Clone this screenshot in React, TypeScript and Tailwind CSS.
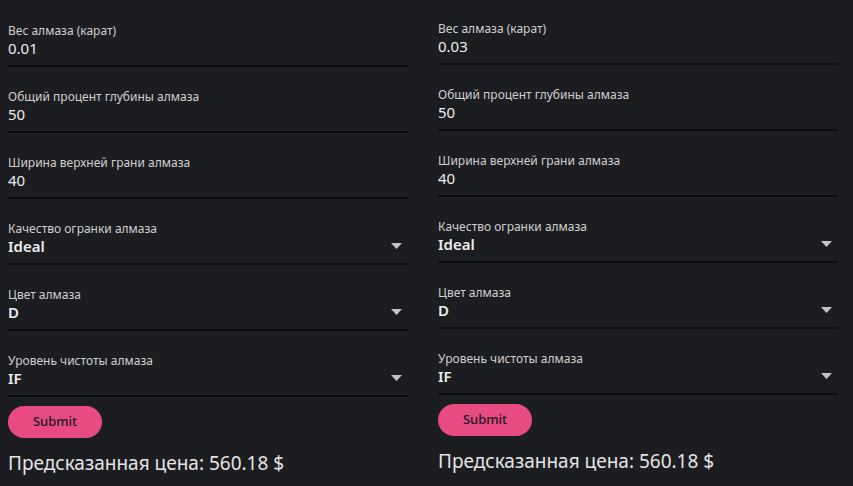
import React from 'react'

type Field = { label: string; value: string; select?: boolean }

const makeFields = (weight: string): Field[] => [
  { label: 'Вес алмаза (карат)', value: weight },
  { label: 'Общий процент глубины алмаза', value: '50' },
  { label: 'Ширина верхней грани алмаза', value: '40' },
  { label: 'Качество огранки алмаза', value: 'Ideal', select: true },
  { label: 'Цвет алмаза', value: 'D', select: true },
  { label: 'Уровень чистоты алмаза', value: 'IF', select: true },
]

const Caret = () => (
  <svg width="11" height="6" viewBox="0 0 11 6" className="shrink-0">
    <path d="M0 0 L11 0 L5.5 6 Z" fill="#c4c4c6" />
  </svg>
)

const FormColumn = ({ weight, offset }: { weight: string; offset: string }) => {
  const fields = makeFields(weight)
  return (
    <div className={`w-[400px] flex flex-col ${offset}`}>
      {fields.map((f, i) => (
        <div key={i} className={`flex flex-col ${i < fields.length - 1 ? 'mb-[23px]' : ''}`}>
          <div className="text-[12px] leading-[14px] text-[#cfcfd1]">{f.label}</div>
          <div className="flex items-center justify-between pr-[6px] pt-[1px]">
            <div className={`text-[15px] leading-[18px] text-[#ececee] ${f.select ? 'font-semibold' : ''}`}>{f.value}</div>
            {f.select && <Caret />}
          </div>
          <div className="h-[8px]"></div>
          <div className="h-[2px] bg-[#0e0f11]"></div>
        </div>
      ))}
      <button className="mt-[9px] w-[94px] h-[32px] rounded-full bg-[#e84a82] text-[13px] font-medium text-[#1a1b1e]">
        Submit
      </button>
      <div className="mt-[11px] text-[19px] leading-7 text-[#e4e4e6]">Предсказанная цена: 560.18 $</div>
    </div>
  )
}

export default function App() {
  return (
    <div className="w-[853px] h-[486px] bg-[#1c1d20] overflow-hidden" style={{ fontFamily: '"Noto Sans", sans-serif' }}>
      <div className="flex gap-[30px] px-2">
        <FormColumn weight="0.01" offset="pt-[24px]" />
        <FormColumn weight="0.03" offset="pt-[22px]" />
      </div>
    </div>
  )
}
